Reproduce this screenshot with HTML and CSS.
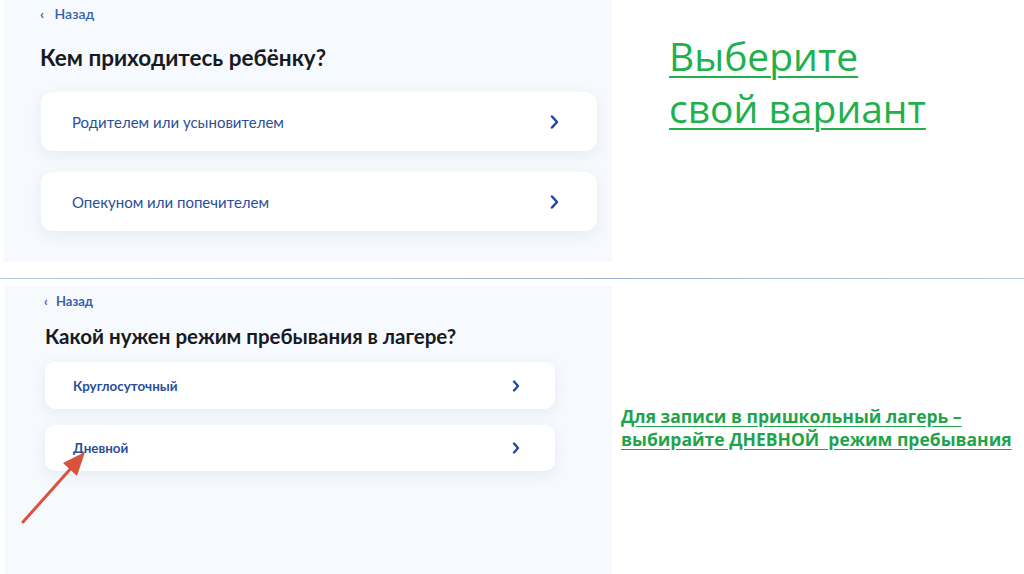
FILE: index.html
```html
<!DOCTYPE html>
<html lang="ru">
<head>
  <meta charset="UTF-8" />
  <meta name="viewport" content="width=device-width, initial-scale=1.0" />
  <title>Выберите свой вариант</title>
  <link rel="stylesheet" href="styles.css">
</head>
<body>
  <div class="slide">
    <section class="row row-top">
      <div class="shot shot-top">
        <a class="back" href="#"><span class="back-arrow">‹</span> Назад</a>
        <h2 class="question">Кем приходитесь ребёнку?</h2>
        <div class="option">
          <span>Родителем или усыновителем</span>
          <svg class="chevron" width="9" height="14" viewBox="0 0 9 14"><path d="M2 1.5l5 5.5-5 5.5" fill="none" stroke="#1d46a6" stroke-width="2.5" stroke-linecap="round" stroke-linejoin="round"/></svg>
        </div>
        <div class="option">
          <span>Опекуном или попечителем</span>
          <svg class="chevron" width="9" height="14" viewBox="0 0 9 14"><path d="M2 1.5l5 5.5-5 5.5" fill="none" stroke="#1d46a6" stroke-width="2.5" stroke-linecap="round" stroke-linejoin="round"/></svg>
        </div>
      </div>
      <div class="side">
        <h1 class="title">Выберите<br>свой вариант</h1>
      </div>
    </section>

    <hr class="divider">

    <section class="row row-bottom">
      <div class="shot shot-bottom">
        <a class="back" href="#"><span class="back-arrow">‹</span> Назад</a>
        <h2 class="question">Какой нужен режим пребывания в лагере?</h2>
        <div class="option">
          <span>Круглосуточный</span>
          <svg class="chevron" width="8" height="12" viewBox="0 0 8 12"><path d="M2 1.5l4 4.5-4 4.5" fill="none" stroke="#1d46a6" stroke-width="2.3" stroke-linecap="round" stroke-linejoin="round"/></svg>
        </div>
        <div class="option">
          <span>Дневной</span>
          <svg class="chevron" width="8" height="12" viewBox="0 0 8 12"><path d="M2 1.5l4 4.5-4 4.5" fill="none" stroke="#1d46a6" stroke-width="2.3" stroke-linecap="round" stroke-linejoin="round"/></svg>
        </div>
        <!-- красная стрелка поверх скриншота -->
        <svg class="pointer" width="90" height="90" viewBox="0 0 90 90">
          <line x1="10" y1="74" x2="60" y2="18" stroke="#d9533c" stroke-width="3" stroke-linecap="round"/>
          <polygon points="72,4 50,15 64,28" fill="#d9533c"/>
        </svg>
      </div>
      <div class="side">
        <p class="note">Для записи в пришкольный лагерь –<br>выбирайте ДНЕВНОЙ&nbsp; режим пребывания</p>
      </div>
    </section>
  </div>
</body>
</html>
```

FILE: styles.css
```css
body {
  margin: 0;
  padding: 0;
  background: #ffffff;
  font-family: 'Lato', 'Open Sans', sans-serif;
}
.slide {
  width: 1024px;
  height: 574px;
  overflow: hidden;
}
.row {
  display: flex;
}
.shot {
  background: #f6f9fd;
  box-sizing: border-box;
  display: flex;
  flex-direction: column;
  position: relative;
}
.shot-top {
  margin-left: 4px;
  width: 608px;
  height: 262px;
  padding: 6px 15px 0 36px;
}
.shot-bottom {
  margin-left: 5px;
  width: 607px;
  height: 288px;
  padding: 8px 57px 0 39px;
}
.back {
  color: #3762a8;
  text-decoration: none;
  font-size: 14px;
  line-height: 16px;
  font-weight: 600;
}
.back-arrow {
  font-weight: bold;
  margin-right: 7px;
}
.question {
  margin: 23px 0 0 0;
  font-size: 22.5px;
  line-height: 26px;
  font-weight: bold;
  color: #161a22;
}
.option {
  background: #ffffff;
  border-radius: 12px;
  box-shadow: 0 4px 14px rgba(120, 140, 180, 0.12);
  display: flex;
  align-items: center;
  justify-content: space-between;
  color: #2c4e98;
}
.shot-top .option {
  margin: 21px 0 0 1px;
  height: 59px;
  padding: 0 38px 0 31px;
  font-size: 15px;
}
.shot-top .option + .option {
  margin-top: 21px;
}
.shot-bottom .back {
  font-size: 13px;
  line-height: 14px;
  font-weight: bold;
}
.shot-bottom .back-arrow {
  margin-right: 5px;
}
.shot-bottom .question {
  margin: 17px 0 0 1px;
  font-size: 20.5px;
  line-height: 22px;
}
.shot-bottom .option {
  margin: 15px 0 0 1px;
  height: 47px;
  padding: 0 35px 0 28px;
  font-size: 13.4px;
  font-weight: bold;
  border-radius: 10px;
}
.shot-bottom .option + .option {
  margin-top: 16px;
  height: 46px;
}
.pointer {
  position: absolute;
  left: 8px;
  top: 162px;
}
.side {
  flex: 1;
}
.title {
  margin: 30px 0 0 57px;
  font-family: 'Open Sans', sans-serif;
  font-weight: normal;
  font-size: 39px;
  line-height: 52px;
  color: #21b04b;
  text-decoration: underline;
  text-decoration-thickness: 2px;
  text-underline-offset: 5px;
}
.divider {
  margin: 16px 0 7px 0;
  height: 1px;
  border: none;
  background: linear-gradient(to right, #b2c8e6, #9db4d8 60%, #b7c9e6);
}
.note {
  margin: 119px 0 0 9px;
  font-family: 'Open Sans', sans-serif;
  font-weight: bold;
  font-size: 17.5px;
  line-height: 23px;
  color: #1fa449;
  text-decoration: underline;
  text-underline-offset: 3px;
}
```
